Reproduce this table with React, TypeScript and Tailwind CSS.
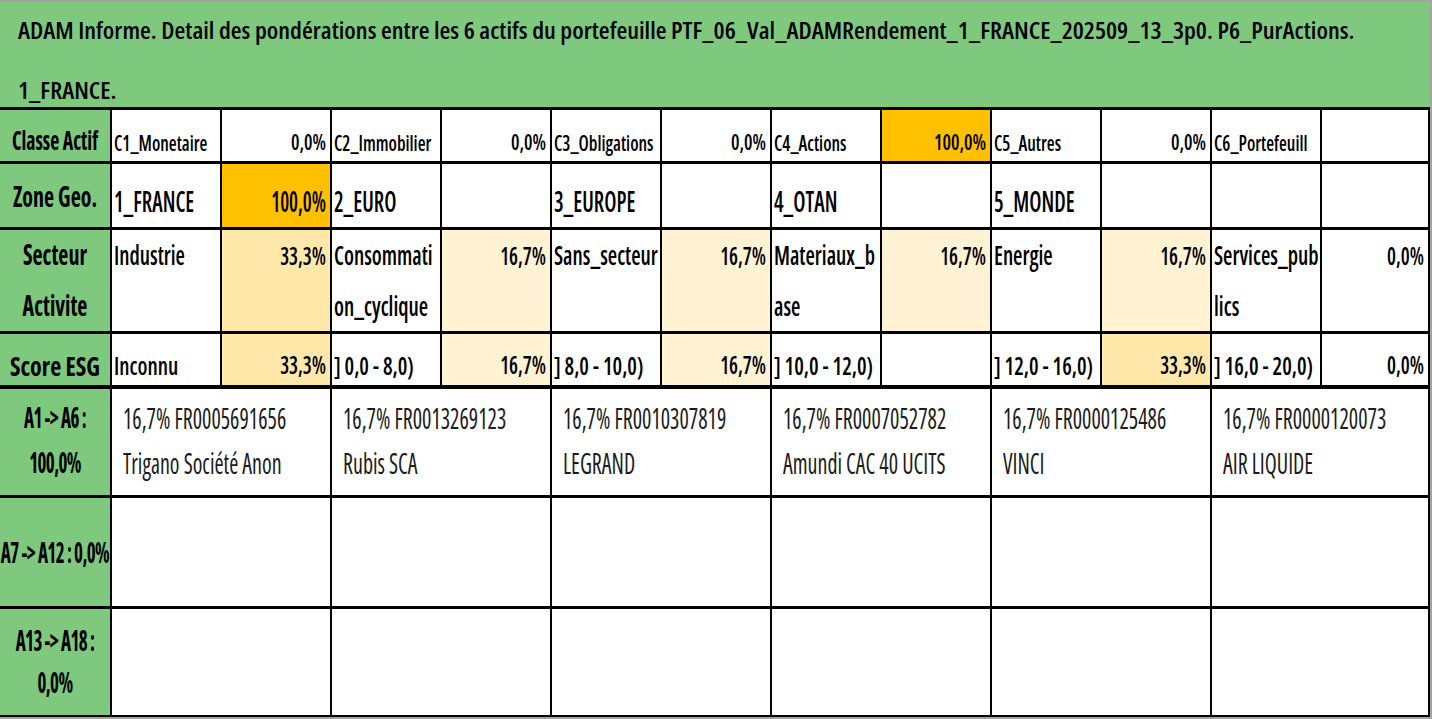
import React from "react";

type Tone = "orange" | "mid" | "light" | "none";
type Cell = { t: string[]; v: string; tone?: Tone };

const BG: Record<Tone, string> = {
  orange: "bg-[#FFC000]",
  mid: "bg-[#FFE8AA]",
  light: "bg-[#FFF3D4]",
  none: "bg-white",
};

const classe: Cell[] = [
  { t: ["C1_Monetaire"], v: "0,0%" },
  { t: ["C2_Immobilier"], v: "0,0%" },
  { t: ["C3_Obligations"], v: "0,0%" },
  { t: ["C4_Actions"], v: "100,0%", tone: "orange" },
  { t: ["C5_Autres"], v: "0,0%" },
  { t: ["C6_Portefeuill"], v: "" },
];

const zone: Cell[] = [
  { t: ["1_FRANCE"], v: "100,0%", tone: "orange" },
  { t: ["2_EURO"], v: "" },
  { t: ["3_EUROPE"], v: "" },
  { t: ["4_OTAN"], v: "" },
  { t: ["5_MONDE"], v: "" },
  { t: [""], v: "" },
];

const secteur: Cell[] = [
  { t: ["Industrie"], v: "33,3%", tone: "mid" },
  { t: ["Consommati", "on_cyclique"], v: "16,7%", tone: "light" },
  { t: ["Sans_secteur"], v: "16,7%", tone: "light" },
  { t: ["Materiaux_b", "ase"], v: "16,7%", tone: "light" },
  { t: ["Energie"], v: "16,7%", tone: "light" },
  { t: ["Services_pub", "lics"], v: "0,0%" },
];

const esg: Cell[] = [
  { t: ["Inconnu"], v: "33,3%", tone: "mid" },
  { t: ["] 0,0 - 8,0)"], v: "16,7%", tone: "light" },
  { t: ["] 8,0 - 10,0)"], v: "16,7%", tone: "light" },
  { t: ["] 10,0 - 12,0)"], v: "" },
  { t: ["] 12,0 - 16,0)"], v: "33,3%", tone: "mid" },
  { t: ["] 16,0 - 20,0)"], v: "0,0%" },
];

const assets: [string, string][] = [
  ["16,7% FR0005691656", "Trigano Société Anon"],
  ["16,7% FR0013269123", "Rubis SCA"],
  ["16,7% FR0010307819", "LEGRAND"],
  ["16,7% FR0007052782", "Amundi CAC 40 UCITS"],
  ["16,7% FR0000125486", "VINCI"],
  ["16,7% FR0000120073", "AIR LIQUIDE"],
];

function TopRow({
  label,
  cells,
  rowCls,
  box,
  labelSpan,
  cellSpan,
  pctSpan,
}: {
  label: string[];
  cells: Cell[];
  rowCls: string;
  box: string;
  labelSpan: string;
  cellSpan: string;
  pctSpan: string;
}) {
  return (
    <div className={"grid grid-cols-[110px_repeat(11,110px)_1fr] grid-rows-[minmax(0,1fr)] border-black " + rowCls}>
      <div className={"overflow-hidden bg-[#7FC97F] text-center font-bold text-black " + box}>
        {label.map((l, i) => (
          <div key={i}>
            <span className={"inline-block leading-none origin-bottom " + labelSpan}>{l}</span>
          </div>
        ))}
      </div>
      {cells.map((c, i) => (
        <React.Fragment key={i}>
          <div className={"overflow-hidden whitespace-nowrap border-l-2 border-black bg-white pl-[2px] font-semibold text-black " + box}>
            {c.t.map((l, j) => (
              <div key={j}>
                <span className={"inline-block leading-none origin-bottom " + cellSpan}>{l}</span>
              </div>
            ))}
          </div>
          <div className={"overflow-hidden border-l-2 border-black pr-[4px] text-right font-semibold text-black " + BG[c.tone ?? "none"] + " " + box}>
            <div>
              <span className={"inline-block leading-none origin-bottom " + pctSpan}>{c.v}</span>
            </div>
          </div>
        </React.Fragment>
      ))}
    </div>
  );
}

function AssetRow({
  label,
  rowCls,
  labelBox,
  items,
}: {
  label: string[];
  rowCls: string;
  labelBox: string;
  items: [string, string][] | null;
}) {
  return (
    <div className={"grid grid-cols-[110px_repeat(5,220px)_1fr] grid-rows-[minmax(0,1fr)] border-black " + rowCls}>
      <div className={"overflow-hidden bg-[#7FC97F] text-center text-[19px] font-bold tracking-[-0.03em] text-black " + labelBox}>
        {label.map((l, i) => (
          <div key={i}>
            <span className="inline-block leading-none origin-bottom scale-y-[1.5]">{l}</span>
          </div>
        ))}
      </div>
      {Array.from({ length: 6 }).map((_, i) => (
        <div
          key={i}
          className="overflow-hidden whitespace-nowrap border-l-2 border-black bg-white pl-[11px] pt-[10px] text-[22px] leading-[45px] font-normal text-[#1c1c1c]"
        >
          {items && (
            <>
              <div>
                <span className="inline-block leading-none origin-bottom scale-y-[1.35]">{items[i][0]}</span>
              </div>
              <div>
                <span className="inline-block leading-none origin-bottom scale-y-[1.35]">{items[i][1]}</span>
              </div>
            </>
          )}
        </div>
      ))}
    </div>
  );
}

export default function App() {
  return (
    <div className="h-[719px] w-[1432px] overflow-hidden border-t-2 border-r-2 border-b-2 border-[#a3a3a3] bg-white font-['Open_Sans',sans-serif] [font-stretch:75%]">
      <div className="flex h-full flex-col border-b-2 border-black">
        <div className="h-[108px] overflow-hidden border-b-[3px] border-black bg-[#7FC97F] pl-[18px] text-[24.8px] leading-[60px] font-semibold text-black">
          <div className="-mt-[3px]">
            <div className="whitespace-nowrap">
              <span className="inline-block leading-none origin-bottom scale-y-[0.96]">
                ADAM Informe. Detail des pondérations entre les 6 actifs du portefeuille PTF_06_Val_ADAMRendement_1_FRANCE_202509_13_3p0. P6_PurActions.
              </span>
            </div>
            <div>
              <span className="inline-block leading-none origin-bottom scale-y-[0.96]">1_FRANCE.</span>
            </div>
          </div>
        </div>
        <div className="flex min-h-0 flex-1 flex-col border-r-2 border-black">
          <TopRow
            label={["Classe Actif"]}
            cells={classe}
            rowCls="h-[54px] shrink-0 border-b-[3px]"
            box="pt-[21px] text-[22px] leading-none"
            labelSpan="text-[19.8px] scale-y-[1.38]"
            cellSpan="text-[18px] scale-y-[1.22]"
            pctSpan="text-[19px] scale-y-[1.18]"
          />
          <TopRow
            label={["Zone Geo."]}
            cells={zone}
            rowCls="h-[66px] shrink-0 border-b-[3px]"
            box="pt-[29px] text-[22px] leading-none"
            labelSpan="text-[22px] scale-y-[1.33] -translate-y-[5px]"
            cellSpan="text-[21.5px] scale-y-[1.38]"
            pctSpan="text-[20px] scale-y-[1.45]"
          />
          <TopRow
            label={["Secteur", "Activite"]}
            cells={secteur}
            rowCls="h-[104px] shrink-0 border-b-[3px]"
            box="pt-[2px] text-[22px] leading-[51px]"
            labelSpan="text-[22px] scale-y-[1.33]"
            cellSpan="text-[21.5px] scale-y-[1.22]"
            pctSpan="text-[20px] scale-y-[1.3]"
          />
          <TopRow
            label={["Score ESG"]}
            cells={esg}
            rowCls="h-[55px] shrink-0 border-b-4"
            box="pt-[21px] text-[22px] leading-none"
            labelSpan="text-[24px] scale-y-[1.08]"
            cellSpan="text-[21.5px] scale-y-[1.15]"
            pctSpan="text-[20px] scale-y-[1.25]"
          />
          <AssetRow
            label={["A1 -> A6 :", "100,0%"]}
            rowCls="h-[109px] shrink-0 border-b-[3px]"
            labelBox="pt-[11px] leading-[45px]"
            items={assets}
          />
          <AssetRow
            label={["A7 -> A12 : 0,0%"]}
            rowCls="h-[111px] shrink-0 border-b-[3px]"
            labelBox="pt-[50px] leading-none"
            items={null}
          />
          <AssetRow
            label={["A13 -> A18 :", "0,0%"]}
            rowCls="min-h-0 flex-1"
            labelBox="pt-[15px] leading-[42px]"
            items={null}
          />
        </div>
      </div>
    </div>
  );
}
